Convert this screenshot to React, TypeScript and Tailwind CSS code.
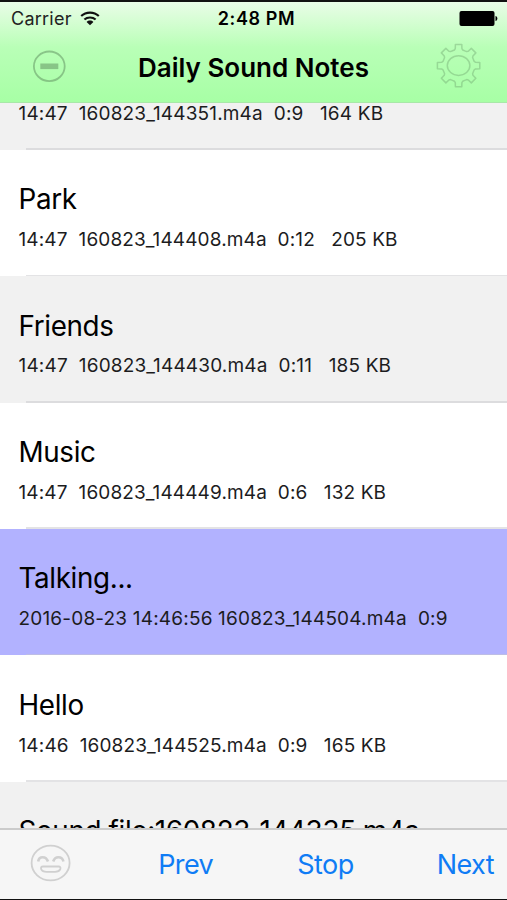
import React from 'react'

interface Note {
  title: string
  detail: string
  rowClass: string
  detailClass: string
}

const notes: Note[] = [
  { title: 'Street', detail: '14:47  160823_144351.m4a  0:9   164 KB', rowClass: 'bg-[#f1f1f1]', detailClass: 'tracking-[0.15px]' },
  { title: 'Park', detail: '14:47  160823_144408.m4a  0:12   205 KB', rowClass: 'bg-white', detailClass: 'tracking-[0.12px]' },
  { title: 'Friends', detail: '14:47  160823_144430.m4a  0:11   185 KB', rowClass: 'bg-[#f1f1f1]', detailClass: 'tracking-[0.16px]' },
  { title: 'Music', detail: '14:47  160823_144449.m4a  0:6   132 KB', rowClass: 'bg-white', detailClass: 'tracking-[0.12px]' },
  { title: 'Talking...', detail: '2016-08-23 14:46:56 160823_144504.m4a  0:9', rowClass: 'bg-[#b2b2ff]', detailClass: 'tracking-[0.18px]' },
  { title: 'Hello', detail: '14:46  160823_144525.m4a  0:9   165 KB', rowClass: 'bg-white', detailClass: 'tracking-[0.14px]' },
  { title: 'Sound file:160823_144335.m4a', detail: '14:46  160823_144335.m4a  0:7   140 KB', rowClass: 'bg-[#f1f1f1]', detailClass: 'tracking-[0.15px]' },
]

function WifiIcon() {
  return (
    <svg width="20" height="15" viewBox="0 0 20 15" fill="none" stroke="#111" strokeWidth="2.1">
      <path d="M1.2 5.1C6 0.4 14 0.4 18.8 5.1" />
      <path d="M4.4 8.6C7.4 5.7 12.6 5.7 15.6 8.6" />
      <path d="M10 14.2L6.6 10.9C8.5 9.1 11.5 9.1 13.4 10.9Z" fill="#111" stroke="none" />
    </svg>
  )
}

function BatteryIcon() {
  return (
    <svg width="39" height="15" viewBox="0 0 39 15" fill="#000">
      <rect x="0.5" y="0" width="35" height="15" rx="2" />
      <path d="M36.5 5C39 5.6 39 9.4 36.5 10Z" />
    </svg>
  )
}

function RemoveIcon() {
  return (
    <svg width="34" height="34" viewBox="0 0 34 34" fill="none" stroke="#659665" strokeOpacity="0.55">
      <ellipse cx="17.3" cy="17.3" rx="15.4" ry="14.8" strokeWidth="1.8" />
      <path d="M8.3 17.3H26.3" strokeWidth="5.6" />
    </svg>
  )
}

// One tooth at the top of the gear, repeated every 45 degrees
const gearPath = (() => {
  const tooth = [
    [-6.1, -14.8],
    [-4.2, -15.6],
    [-3.3, -17],
    [-3.2, -21.2],
    [3.2, -21.2],
    [3.3, -17],
    [4.2, -15.6],
  ]
  const points: string[] = []
  for (let i = 0; i < 8; i++) {
    const a = (i * Math.PI) / 4
    tooth.forEach(([x, y]) => {
      const px = x * Math.cos(a) - y * Math.sin(a)
      const py = x * Math.sin(a) + y * Math.cos(a)
      points.push(`${px.toFixed(2)} ${py.toFixed(2)}`)
    })
  }
  return `M${points.join('L')}Z`
})()

function GearIcon() {
  return (
    <svg width="46" height="46" viewBox="-23.6 -22.6 46 46" fill="none" stroke="#659665" strokeOpacity="0.36" strokeWidth="1.5" strokeLinejoin="round">
      <path d={gearPath} />
      <ellipse rx="11.3" ry="9.8" />
    </svg>
  )
}

function SmileIcon() {
  return (
    <svg width="42" height="40" viewBox="0 0 42 40" fill="none" stroke="#d0d0d0" strokeWidth="1.8">
      <ellipse cx="20.6" cy="20" rx="19" ry="17.4" />
      <path d="M8.2 18.5C9 12.8 16 12.8 18 18.5" strokeWidth="2.6" />
      <path d="M23.2 18.5C25 12.8 32 12.8 33.5 18.5" strokeWidth="2.6" />
      <path d="M13 23.5H28.5C32 23.5 31 28.8 25 28.8H16.5C10.5 28.8 9.5 23.5 13 23.5Z" />
    </svg>
  )
}

function NoteRow({ note }: { note: Note }) {
  return (
    <li className={`flex h-[126.4px] shrink-0 flex-col whitespace-pre ${note.rowClass}`}>
      <div className="px-[18.5px] pt-[31.4px] text-[27.8px] leading-9 tracking-[-0.35px] text-black">{note.title}</div>
      <div className={`px-[18.5px] pt-[10.8px] text-[19px] leading-6 text-[#1c1c1e] ${note.detailClass}`}>{note.detail}</div>
      <div className="mt-auto ml-[26px] h-[1.5px] shrink-0 bg-[#c8c7cc]/50" />
    </li>
  )
}

export default function App() {
  return (
    <div className="flex h-[900px] w-[507px] flex-col overflow-hidden border-t-2 border-b border-[#111] bg-white font-['Inter','Liberation_Sans',sans-serif]">
      <header className="flex h-[101px] shrink-0 flex-col border-b border-[#a8e8a8] bg-linear-to-b from-[#e9fce7] via-[#b9ffb7] via-45% to-[#a7ffa5]">
        <div className="grid h-8 shrink-0 grid-cols-3 items-center pr-[9px] pl-[11px]">
          <div className="flex items-center gap-[8px] text-[18px] tracking-[0.25px] text-[#222]">
            <span>Carrier</span>
            <WifiIcon />
          </div>
          <span className="pl-1 text-center text-[18px] font-semibold tracking-[0.6px] text-black">2:48 PM</span>
          <div className="flex justify-end">
            <BatteryIcon />
          </div>
        </div>
        <div className="flex h-[64px] shrink-0 items-center justify-between pr-[26px] pl-8">
          <button aria-label="Remove"><RemoveIcon /></button>
          <h1 className="pt-1 pl-[6px] text-[26px] leading-9 font-semibold text-black">Daily Sound Notes</h1>
          <button aria-label="Settings"><GearIcon /></button>
        </div>
      </header>

      <main className="min-h-0 flex-1 overflow-hidden">
        <ul className="-mt-[79.6px] flex flex-col">
          {notes.map((note) => (
            <NoteRow key={note.detail} note={note} />
          ))}
        </ul>
      </main>

      <footer className="flex h-[71px] shrink-0 items-center justify-between border-t-2 border-[#cbcbcb] bg-[#f6f6f6] pr-[13px] pb-[3px] pl-[30px] text-[27px] tracking-[-0.6px] text-[#0f7cf5]">
        <button aria-label="Mood"><SmileIcon /></button>
        <button className="pt-1 pl-[3px] leading-8">Prev</button>
        <button className="pt-1 pl-[1px] leading-8">Stop</button>
        <button className="pt-1 leading-8">Next</button>
      </footer>
    </div>
  )
}
